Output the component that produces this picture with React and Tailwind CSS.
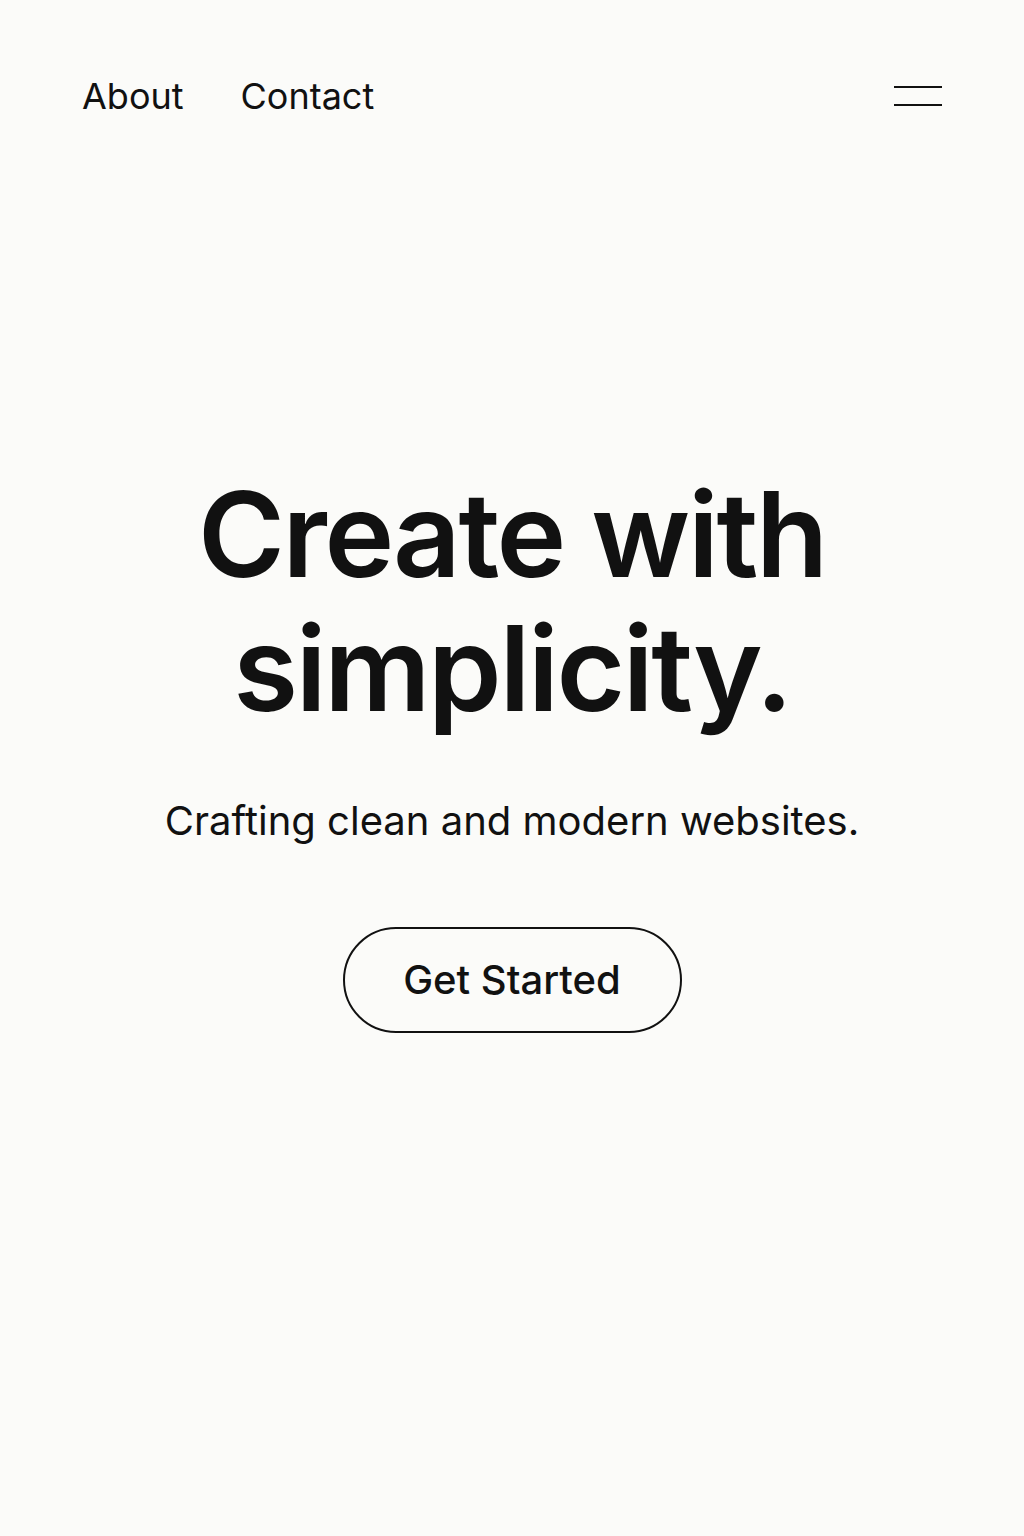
import React from 'react';

const Header = () => (
  <header className="flex items-center justify-between pl-[82px] pr-[82px] pt-[72px]">
    <nav className="flex items-center gap-[57px] text-[36px] leading-[48px] text-[#111]">
      <a href="#">About</a>
      <a href="#">Contact</a>
    </nav>
    {/* menu */}
    <button className="flex h-[48px] w-[48px] flex-col justify-center gap-[16px]">
      <span className="block h-[2px] w-full bg-[#111]" />
      <span className="block h-[2px] w-full bg-[#111]" />
    </button>
  </header>
);

const Hero = () => (
  <section className="flex flex-col items-center pt-[347px] text-center">
    <h1 className="text-[118px] font-semibold leading-[134px] tracking-[-0.02em] text-[#111]">
      Create with
      <br />
      simplicity.
    </h1>
    <p className="mt-[62px] text-[40px] leading-[48px] text-[#111]">
      Crafting clean and modern websites.
    </p>
    <a
      href="#"
      className="mt-[82px] flex h-[106px] w-[339px] items-center justify-center rounded-full border-2 border-[#111] text-[40px] font-medium text-[#111]"
    >
      Get Started
    </a>
  </section>
);

export default function App() {
  return (
    <div className="min-h-[1536px] bg-[#fbfbf9] font-['Inter',sans-serif]">
      <Header />
      <Hero />
    </div>
  );
}
